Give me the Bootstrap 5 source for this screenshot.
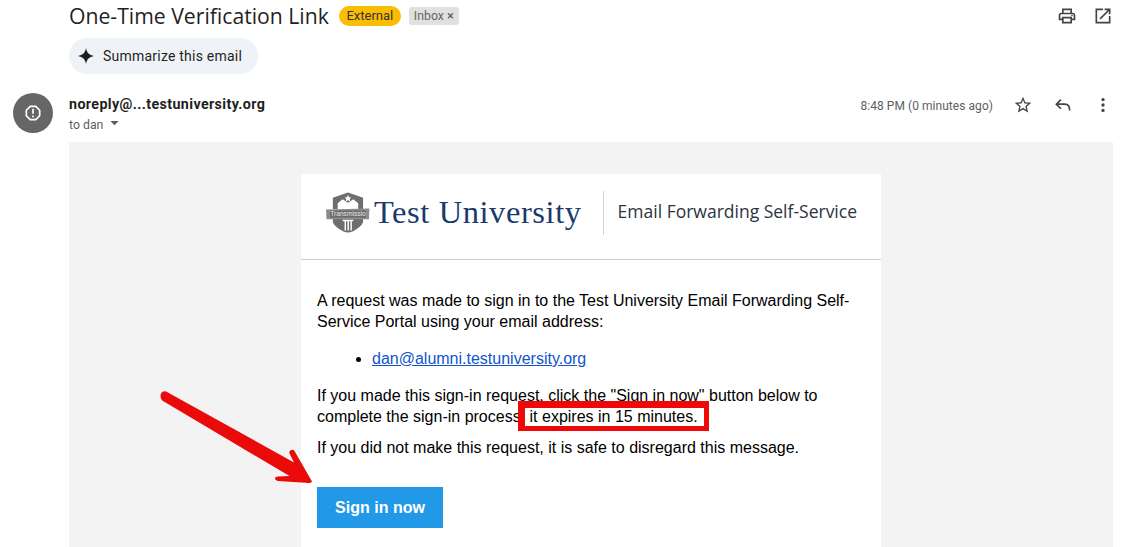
<!DOCTYPE html>
<html lang="en">
<head>
<meta charset="utf-8">
<title>One-Time Verification Link</title>
<link href="https://cdn.jsdelivr.net/npm/bootstrap@5.3.0/dist/css/bootstrap.min.css" rel="stylesheet">
<style>
html,body{height:547px;overflow:hidden;background:#fff}
body{font-family:Roboto,"Liberation Sans",sans-serif;color:#1f1f1f}
.gm-root{position:relative;height:547px;overflow:hidden;padding:0 10px 0 13px}
.gm-toprow{height:32px;padding-left:56px}
.gm-title{font-family:"Open Sans",Roboto,sans-serif;font-size:21.2px;font-weight:400;margin:0;color:#1f1f1f;line-height:32px;white-space:nowrap}
.gm-ext{background:#fbbc04;border-radius:10px;height:20px;width:62px;font-size:13px;line-height:20px;text-align:center;margin-left:10px;color:#333}
.gm-inbox{background:#dfe1df;border-radius:3px;height:18px;width:50px;font-size:12.300px;line-height:18px;text-align:center;margin-left:8px;color:#666}
.gm-x{font-size:13px;color:#555;margin-left:3px}
.gm-ico{width:20px;height:20px;fill:#444}
.gm-toolbar{gap:16px}
.gm-chip{margin:6px 0 0 56px;height:36px;width:189px;border-radius:18px;background:#eff3f8;font-size:14px;padding-left:7px;gap:7px;letter-spacing:.22px}
.gm-sender{margin-top:19px;height:49px}
.gm-avatar{width:40px;height:40px;border-radius:50%;background:#666;flex:none;margin-right:16px}
.gm-from{font-size:14.300px;font-weight:700;line-height:20px;margin-top:1px;letter-spacing:.37px}
.gm-to{font-size:12.300px;color:#5e5e5e;line-height:20px;margin-top:1px}
.gm-time{font-size:12px;color:#5e5e5e;margin-right:20px;letter-spacing:.05px}
.gm-actions{gap:20px;height:24px;margin-top:2px}
.gm-frame{margin-left:56px;background:#f3f3f3;height:405px;padding-top:32px}
.gm-card{width:580px;background:#fff;margin:0 auto;height:373px;font-family:"Liberation Sans",Arial,sans-serif;color:#000;font-size:16px;line-height:21px}
.gm-head{height:86px;border-bottom:1px solid #ccc;padding:0 24px 8px 25px}
.gm-brand{font-family:"Liberation Serif",serif;font-size:32.500px;color:#1b3a6b;margin-left:4px;letter-spacing:.58px;line-height:1;white-space:nowrap}
.gm-sep{width:1px;height:44px;background:#d5d5d5;margin:0 13px 0 21px}
.gm-svc{font-family:"Open Sans",sans-serif;font-size:17.500px;color:#2c3440;white-space:nowrap;margin:0 0 2px 1px}
.gm-body{padding:30px 16px 0}
.gm-body p{margin:0 0 10px}
.gm-body ul{margin:16px 0 16px;padding-left:55px}
.gm-link{color:#1155cc}
.gm-btn,.gm-btn:hover{display:inline-block;margin-top:19px;background:#2299e6;color:#fff;font-weight:700;width:126px;height:41px;line-height:41px;text-align:center;border-radius:0;padding:0;border:0;font-size:16px}
.gm-box{position:absolute;left:518px;top:401px;width:191px;height:30px;border:6px solid #ee0808;border-width:7px 5px 5px 7px}
.gm-arrow{position:absolute;left:150px;top:380px;width:180px;height:120px}
</style>
</head>
<body>
<div class="gm-root">
  <div class="d-flex align-items-center gm-toprow">
    <h1 class="gm-title">One-Time Verification Link</h1>
    <span class="gm-ext">External</span>
    <span class="gm-inbox">Inbox<span class="gm-x">×</span></span>
    <div class="d-flex ms-auto gm-toolbar">
      <svg class="gm-ico" viewBox="0 0 24 24"><path d="M19 8h-1V3H6v5H5c-1.660 0-3 1.340-3 3v6h4v4h12v-4h4v-6c0-1.660-1.340-3-3-3zM8 5h8v3H8V5zm8 12v2H8v-4h8v2zm2-2v-2H6v2H4v-4c0-.55.45-1 1-1h14c.55 0 1 .45 1 1v4h-2z"/><circle cx="18" cy="11.500" r="1"/></svg>
      <svg class="gm-ico" viewBox="0 0 24 24"><path d="M19 19H5V5h7V3H3v18h18v-9h-2v7zM14 3v2h3.590l-9.830 9.830 1.410 1.410L19 6.410V10h2V3h-7z"/></svg>
    </div>
  </div>
  <div class="d-flex align-items-center gm-chip">
    <svg width="20" height="20" viewBox="0 0 20 20"><path fill="#1f1f1f" d="M10 2c.8 4.700 3.300 7.200 8 8-4.700.8-7.200 3.300-8 8-.8-4.700-3.300-7.200-8-8 4.700-.8 7.200-3.300 8-8z"/></svg>
    <span>Summarize this email</span>
  </div>
  <div class="d-flex gm-sender">
    <div class="gm-avatar d-flex align-items-center justify-content-center">
      <svg width="20" height="20" viewBox="0 0 24 24"><path fill="#fff" d="M15.730 3H8.270L3 8.270v7.460L8.270 21h7.460L21 15.730V8.270L15.730 3zM19 14.900L14.900 19H9.100L5 14.900V9.100L9.100 5h5.800L19 9.100v5.800zM11 7h2v6h-2zM11 15h2v2h-2z"/></svg>
    </div>
    <div>
      <div class="gm-from">noreply@...testuniversity.org</div>
      <div class="gm-to">to dan <svg width="9" height="5" viewBox="0 0 10 6" class="ms-1 mb-1"><path fill="#5e5e5e" d="M0 0h10L5 5z"/></svg></div>
    </div>
    <div class="d-flex ms-auto align-items-start">
      <span class="gm-time mt-1">8:48 PM (0 minutes ago)</span>
      <div class="d-flex gm-actions">
        <svg class="gm-ico" viewBox="0 0 24 24"><path d="M22 9.240l-7.190-.620L12 2 9.190 8.630 2 9.240l5.460 4.730L5.820 21 12 17.270 18.180 21l-1.630-7.030L22 9.240zM12 15.400l-3.760 2.270 1-4.280-3.320-2.880 4.380-.38L12 6.100l1.710 4.040 4.380.38-3.320 2.880 1 4.280L12 15.400z"/></svg>
        <svg class="gm-ico" viewBox="0 0 24 24"><path fill="none" stroke="#444" stroke-width="2" d="M9.500 5.500L4 11l5.500 5.500M4 11h10c3.500 0 6 2.500 6 7.500"/></svg>
        <svg class="gm-ico" viewBox="0 0 24 24"><circle cx="12" cy="5.500" r="2"/><circle cx="12" cy="12" r="2"/><circle cx="12" cy="18.500" r="2"/></svg>
      </div>
    </div>
  </div>
  <div class="gm-frame">
    <div class="gm-card">
      <div class="d-flex align-items-center gm-head">
        <svg width="45" height="43" viewBox="0 0 45 43">
          <path fill="#6e6e6e" d="M22.500 1L38 6.500V18H7V6.500z"/>
          <path fill="#6e6e6e" d="M7 27h31v4c0 3-9 11-15.500 11S7 34 7 31z"/>
          <path fill="#fff" d="M12 12l5-4 5.500 3.500L28 8l5 4v6H12z"/>
          <path fill="#fff" d="M22.500 3.500l1.200 2.300 2.300.3-1.700 1.600.4 2.300-2.200-1.100-2.200 1.100.4-2.300L19 6.100l2.300-.3z"/>
          <path fill="#8c8c8c" d="M0 18.500l44.500-1-.5 11H.500z"/>
          <path fill="#6a6a6a" d="M4 19.500h37v7H4z"/>
          <text x="22.500" y="25.300" font-size="6.800" fill="#e8e8e8" text-anchor="middle" font-family="Liberation Sans">Transmissio</text>
          <path fill="#fff" d="M17 29h11v1.500h-1.500V40h-1.500v-9.500h-1.500V40H22v-9.500h-1.500V40H19v-9.500h-.5V40h0v-9.500H17z"/>
        </svg>
        <span class="gm-brand">Test University</span>
        <span class="gm-sep"></span>
        <span class="gm-svc">Email Forwarding Self-Service</span>
      </div>
      <div class="gm-body">
        <p>A request was made to sign in to the Test University Email Forwarding Self-Service Portal using your email address:</p>
        <ul><li><a href="#" class="gm-link">dan@alumni.testuniversity.org</a></li></ul>
        <p>If you made this sign-in request, click the "Sign in now" button below to complete the sign-in process, it expires in 15 minutes.</p>
        <p>If you did not make this request, it is safe to disregard this message.</p>
        <a href="#" class="btn gm-btn">Sign in now</a>
      </div>
    </div>
  </div>
  <div class="gm-box"></div>
  <svg class="gm-arrow" viewBox="0 0 180 120">
    <path fill="#ea0a0a" d="M11 13.500c1.500-2.500 4-2.800 6-1.600l127 70.500-4.500-9c-1-2.500 3-5 5-2.500L162 101.500c0 0-.5 1.500-3 1.500l-31-2c-4-.5-4-4.500 0-4.500l11.500-.5L13 21c-2.500-1.500-3-5-2-7.500z"/>
  </svg>
</div>
</body>
</html>
